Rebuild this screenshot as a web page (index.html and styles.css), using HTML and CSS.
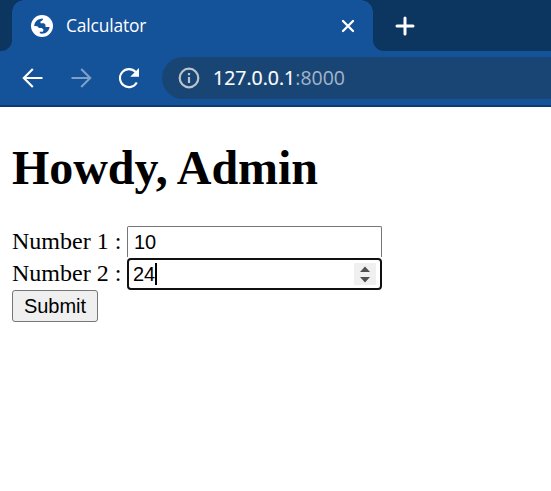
FILE: index.html
```html
<!DOCTYPE html>
<html lang="en">
<head>
<meta charset="utf-8">
<title>Calculator</title>
<link rel="stylesheet" href="styles.css">
</head>
<body>
<header class="browser">
  <div class="tabs">
    <div class="edge left"></div>
    <div class="tab">
      <svg class="globe" viewBox="0 0 22 22"><circle cx="11" cy="11" r="11" fill="#fff"/><path d="M3.2 11C3.2 7 6.8 3.4 11.8 3.4V5L9.5 6.5V8.3H13L14.5 9.8V12H18.6C18 16 15 18.7 11 18.7L8.8 18.3V16.8H11.8L12.6 14.8 10.8 13H8L6.4 11.2Z" fill="#14529a"/></svg>
      <span class="title">Calculator</span>
      <svg class="close" viewBox="0 0 14 14"><path d="M2 2 12 12M12 2 2 12"/></svg>
    </div>
    <div class="edge right"></div>
    <svg class="plus" viewBox="0 0 20 20"><path d="M10 2V18M2 10H18"/></svg>
  </div>
  <div class="toolbar">
    <svg class="nav" viewBox="0 0 24 24"><path d="M21.5 12H3M11.8 3 2.8 12l9 9"/></svg>
    <svg class="nav forward" viewBox="0 0 24 24"><path d="M2.5 12H21M12.2 3l9 9-9 9"/></svg>
    <svg class="nav reload" viewBox="0 0 24 24"><path d="M19.8 16.5A9 9 0 1 1 18.6 6"/><path class="solid" d="M22 2V10.8H13.2Z"/></svg>
    <div class="address">
      <svg class="info" viewBox="0 0 22 22"><circle cx="11" cy="11" r="9.3"/><path d="M11 10V16M11 6V8.2"/></svg>
      <span class="host">127.0.0.1</span><span class="port">:8000</span>
    </div>
  </div>
</header>
<main>
  <h1>Howdy, Admin</h1>
  <form>
    <div class="row"><span class="label">Number 1 :</span><div class="field">10</div></div>
    <div class="row"><span class="label">Number 2 :</span><div class="field focused">24<i class="caret"></i>
      <svg class="spinner" viewBox="0 0 22 22"><path d="M6 9 11 3.5 16 9ZM6 14h10l-5 5.5Z"/></svg></div></div>
    <button type="button">Submit</button>
  </form>
</main>
</body>
</html>
```
FILE: styles.css
```css
* { box-sizing: border-box; }
body { margin: 0; width: 551px; height: 491px; overflow: hidden; background: #fff; color: #000; font-family: "Liberation Serif", serif; }
svg { display: block; flex: none; fill: none; }
.browser { height: 107px; background: #14529a; border-bottom: 2px solid #0d3c72; font-family: "Open Sans", sans-serif; color: #fff; }
.tabs { display: flex; height: 51px; background: #14529a; }
.edge { background: #0c355f; height: 51px; }
.left { width: 12px; border-bottom-right-radius: 11px; }
.tab { width: 361px; height: 51px; display: flex; align-items: center; padding-left: 19px; background: radial-gradient(circle at 12px 12px, #14529a 11.5px, #0c355f 12px) 0 0 / 12px 12px no-repeat, radial-gradient(circle at 0 12px, #14529a 11.5px, #0c355f 12px) 100% 0 / 12px 12px no-repeat, #14529a; }
.globe { width: 22px; height: 22px; }
.title { margin-left: 13px; width: 275px; padding-bottom: 1px; font-size: 17.4px; line-height: 24px; letter-spacing: -0.15px; }
.close { width: 14px; height: 14px; stroke: #fff; stroke-width: 2.3; stroke-linecap: round; }
.right { position: absolute; left: 373px; right: 0; border-bottom-left-radius: 11px; }
.plus { position: relative; width: 20px; height: 20px; margin: 16px 0 0 22px; stroke: #fff; stroke-width: 3; stroke-linecap: round; }
.toolbar { height: 54px; display: flex; align-items: center; padding-left: 21px; }
.nav { width: 24px; height: 24px; margin-right: 24px; stroke: #fff; stroke-width: 2.1; }
.forward { opacity: .45; }
.reload { margin-right: 21px; }
.solid { fill: #fff; stroke: none; }
.address { flex: 1; height: 42px; display: flex; align-items: center; padding-left: 16px; border-radius: 21px 0 0 21px; background: #194574; font-size: 19.5px; line-height: 28px; }
.info { width: 22px; height: 22px; margin-right: 13px; stroke: #bcc3cb; stroke-width: 2.2; }
.host { -webkit-text-stroke: 0.2px #fff; }
.port { color: #a3b5ca; }
main { padding: 32px 12px 0; }
h1 { margin: 0 0 29px; font-size: 48px; line-height: 58px; letter-spacing: -0.08px; }
.row { display: flex; height: 32px; align-items: flex-start; }
.label { width: 115px; font-size: 24px; line-height: 31px; white-space: nowrap; }
.field { width: 255px; height: 31px; display: flex; align-items: center; padding-left: 6px; border: 1px solid #767676; border-bottom: 0; border-radius: 2px 2px 0 0; font: 20px/30px "Liberation Sans", sans-serif; }
.focused { height: 32px; padding-left: 4px; border: 2px solid #101010; border-radius: 4px; line-height: 28px; }
.field, .caret { position: relative; }
.caret { width: 2px; height: 22px; background: #000; }
.spinner { width: 22px; height: 22px; margin: 0 4px 0 auto; background: #f0f0f0; fill: #505050; }
button { display: block; width: 86px; height: 32px; padding: 0; border: 1px solid #767676; border-radius: 3px; background: #efefef; color: #000; font: 20px/28px "Liberation Sans", sans-serif; }
```
